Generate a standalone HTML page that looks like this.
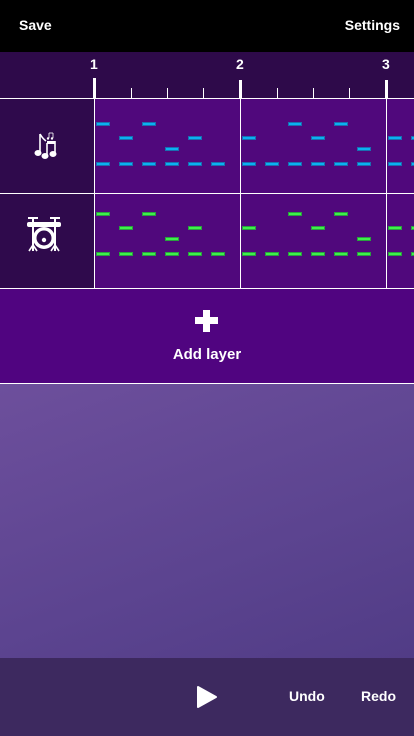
<!DOCTYPE html>
<html><head><meta charset="utf-8"><style>
*{margin:0;padding:0;box-sizing:border-box}
body{width:414px;height:736px;overflow:hidden;position:relative;font-family:"Liberation Sans",sans-serif;background:#000;color:#fff}
.a{position:absolute}
.b{position:absolute;width:14px;height:4px;background:#0bb0f2;box-shadow:0 0 0 1px #1a6fb0 inset}
.g{position:absolute;width:14px;height:4px;background:#3ef04a;box-shadow:0 0 0 1px #2aa040 inset}
.t{position:absolute;background:#fff}
</style></head><body>
<div class="a" style="left:19px;top:17px;font-size:14px;font-weight:bold">Save</div>
<div class="a" style="right:14px;top:17px;font-size:14px;font-weight:bold">Settings</div>
<div class="a" style="left:0;top:52px;width:414px;height:46px;background:#2e0a4a"></div>
<div class="a" style="left:90px;top:56px;font-size:14px;font-weight:bold">1</div>
<div class="a" style="left:236px;top:56px;font-size:14px;font-weight:bold">2</div>
<div class="a" style="left:382px;top:56px;font-size:14px;font-weight:bold">3</div>
<div class="t" style="left:93px;top:78px;width:3px;height:20px"></div>
<div class="t" style="left:239px;top:80px;width:3px;height:18px"></div>
<div class="t" style="left:385px;top:80px;width:3px;height:18px"></div>
<div class="t" style="left:131px;top:88px;width:1px;height:10px"></div>
<div class="t" style="left:167px;top:88px;width:1px;height:10px"></div>
<div class="t" style="left:203px;top:88px;width:1px;height:10px"></div>
<div class="t" style="left:277px;top:88px;width:1px;height:10px"></div>
<div class="t" style="left:313px;top:88px;width:1px;height:10px"></div>
<div class="t" style="left:349px;top:88px;width:1px;height:10px"></div>
<div class="a" style="left:0;top:98px;width:94px;height:190px;background:#2f0a4c"></div>
<div class="a" style="left:94px;top:98px;width:320px;height:190px;background:#50087c"></div>
<div class="t" style="left:0;top:98px;width:414px;height:1px"></div>
<div class="t" style="left:0;top:193px;width:414px;height:1px"></div>
<div class="t" style="left:0;top:288px;width:414px;height:1px"></div>
<div class="t" style="left:94px;top:98px;width:1px;height:190px"></div>
<div class="t" style="left:240px;top:98px;width:1px;height:190px"></div>
<div class="t" style="left:386px;top:98px;width:1px;height:190px"></div>
<svg class="a" style="left:34px;top:131px" width="26" height="30" viewBox="0 0 26 30" fill="#fff" stroke="#fff">
<line x1="6" y1="3" x2="6" y2="22" stroke-width="1.6"/>
<path d="M6 3 Q9 8 12 10" fill="none" stroke-width="1.6"/>
<ellipse cx="4" cy="22" rx="3.5" ry="3" stroke="none"/>
<line x1="13" y1="12" x2="13" y2="25" stroke-width="1.6"/>
<line x1="21" y1="10" x2="21" y2="23" stroke-width="1.6"/>
<rect x="13" y="10" width="8" height="3" stroke="none"/>
<ellipse cx="11" cy="25" rx="3.5" ry="3" stroke="none"/>
<ellipse cx="19" cy="23" rx="3.5" ry="3" stroke="none"/>
<line x1="15" y1="2" x2="15" y2="7" stroke-width="0.8"/><circle cx="14" cy="7.5" r="1.2" stroke="none"/>
<line x1="19" y1="2" x2="19" y2="7" stroke-width="0.8"/><circle cx="18" cy="7.5" r="1.2" stroke="none"/>
<line x1="15" y1="2" x2="19" y2="2" stroke-width="0.8"/>
</svg>
<svg class="a" style="left:26px;top:215px" width="36" height="38" viewBox="0 0 36 38" fill="#fff" stroke="#fff">
<rect x="2" y="2" width="10" height="2" stroke="none"/><rect x="24" y="2" width="10" height="2" stroke="none"/>
<line x1="7" y1="3" x2="7" y2="36" stroke-width="2"/><line x1="29" y1="3" x2="29" y2="36" stroke-width="2"/>
<rect x="1" y="7" width="34" height="5" rx="2" stroke="none"/>
<circle cx="18" cy="23" r="11" stroke="none"/><circle cx="18" cy="23" r="7.5" fill="#2f0a4c" stroke="none"/><circle cx="18" cy="25" r="2.2" stroke="none"/>
<line x1="7" y1="30" x2="3" y2="36" stroke-width="1.6"/><line x1="7" y1="30" x2="11" y2="36" stroke-width="1.6"/>
<line x1="29" y1="30" x2="25" y2="36" stroke-width="1.6"/><line x1="29" y1="30" x2="33" y2="36" stroke-width="1.6"/>
</svg>
<div class="b" style="left:96px;top:122px"></div><div class="b" style="left:142px;top:122px"></div>
<div class="b" style="left:119px;top:136px"></div><div class="b" style="left:188px;top:136px"></div>
<div class="b" style="left:165px;top:147px"></div>
<div class="b" style="left:96px;top:162px"></div><div class="b" style="left:119px;top:162px"></div><div class="b" style="left:142px;top:162px"></div><div class="b" style="left:165px;top:162px"></div><div class="b" style="left:188px;top:162px"></div><div class="b" style="left:211px;top:162px"></div>
<div class="b" style="left:288px;top:122px"></div><div class="b" style="left:334px;top:122px"></div>
<div class="b" style="left:242px;top:136px"></div><div class="b" style="left:311px;top:136px"></div>
<div class="b" style="left:357px;top:147px"></div>
<div class="b" style="left:242px;top:162px"></div><div class="b" style="left:265px;top:162px"></div><div class="b" style="left:288px;top:162px"></div><div class="b" style="left:311px;top:162px"></div><div class="b" style="left:334px;top:162px"></div><div class="b" style="left:357px;top:162px"></div>
<div class="b" style="left:388px;top:136px"></div><div class="b" style="left:411px;top:136px"></div>
<div class="b" style="left:388px;top:162px"></div><div class="b" style="left:411px;top:162px"></div>
<div class="g" style="left:96px;top:212px"></div><div class="g" style="left:142px;top:212px"></div>
<div class="g" style="left:119px;top:226px"></div><div class="g" style="left:188px;top:226px"></div>
<div class="g" style="left:165px;top:237px"></div>
<div class="g" style="left:96px;top:252px"></div><div class="g" style="left:119px;top:252px"></div><div class="g" style="left:142px;top:252px"></div><div class="g" style="left:165px;top:252px"></div><div class="g" style="left:188px;top:252px"></div><div class="g" style="left:211px;top:252px"></div>
<div class="g" style="left:288px;top:212px"></div><div class="g" style="left:334px;top:212px"></div>
<div class="g" style="left:242px;top:226px"></div><div class="g" style="left:311px;top:226px"></div>
<div class="g" style="left:357px;top:237px"></div>
<div class="g" style="left:242px;top:252px"></div><div class="g" style="left:265px;top:252px"></div><div class="g" style="left:288px;top:252px"></div><div class="g" style="left:311px;top:252px"></div><div class="g" style="left:334px;top:252px"></div><div class="g" style="left:357px;top:252px"></div>
<div class="g" style="left:388px;top:226px"></div><div class="g" style="left:411px;top:226px"></div>
<div class="g" style="left:388px;top:252px"></div><div class="g" style="left:411px;top:252px"></div>
<div class="a" style="left:0;top:289px;width:414px;height:94px;background:#500480"></div>
<div class="t" style="left:195px;top:317px;width:23px;height:7px"></div>
<div class="t" style="left:203px;top:310px;width:7px;height:22px"></div>
<div class="a" style="left:0;top:346px;width:414px;text-align:center;font-size:15px;font-weight:bold">Add layer</div>
<div class="t" style="left:0;top:383px;width:414px;height:1px"></div>
<div class="a" style="left:0;top:384px;width:414px;height:274px;background:linear-gradient(160deg,#6d4f9c,#5c4490 60%,#513c86)"></div>
<div class="a" style="left:0;top:658px;width:414px;height:78px;background:#3d295f"></div>
<svg class="a" style="left:196px;top:685px" width="22" height="24" viewBox="0 0 22 24"><path d="M2 2 L20 12 L2 22 Z" fill="#fff" stroke="#fff" stroke-width="2" stroke-linejoin="round"/></svg>
<div class="a" style="left:289px;top:688px;font-size:14px;font-weight:bold">Undo</div>
<div class="a" style="left:361px;top:688px;font-size:14px;font-weight:bold">Redo</div>
</body></html>
